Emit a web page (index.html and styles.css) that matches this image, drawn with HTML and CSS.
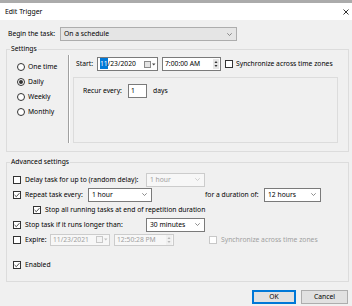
FILE: index.html
```html
<!DOCTYPE html>
<html lang="en">
<head>
  <meta charset="UTF-8" />
  <title>Edit Trigger</title>
  <link rel="stylesheet" href="styles.css">
</head>
<body>
  <div class="dialog">
    <div class="titlebar">
      <span>Edit Trigger</span>
      <svg class="close" width="6" height="6" viewBox="0 0 6 6"><path d="M0.5 0.5 L5.5 5.5 M5.5 0.5 L0.5 5.5" stroke="#333" stroke-width="1" fill="none"/></svg>
    </div>

    <div class="begin">
      <span class="lbl">Begin the task:</span>
      <div class="select flat">
        <span>On a schedule</span>
        <svg width="5" height="3" viewBox="0 0 5 3"><path d="M0.3 0.3 L2.5 2.5 L4.7 0.3" fill="none" stroke="#707070" stroke-width="0.8"/></svg>
      </div>
    </div>

    <fieldset class="group settings">
      <legend>Settings</legend>
      <div class="settings-body">
        <div class="radios">
          <div class="radio-row"><span class="radio"></span>One time</div>
          <div class="radio-row"><span class="radio on"></span>Daily</div>
          <div class="radio-row"><span class="radio"></span>Weekly</div>
          <div class="radio-row"><span class="radio"></span>Monthly</div>
        </div>
        <div class="sep"></div>
        <div class="schedule">
          <div class="start-row">
            <span class="lbl start-lbl">Start:</span>
            <div class="field date">
              <span><span class="sel">11</span>/23/2020</span>
              <svg width="12" height="7" viewBox="0 0 12 7"><rect x="0.5" y="0.5" width="6" height="6" fill="#e4e4e4" stroke="#8a8a8a"/><path d="M8 2.5 h3.5 l-1.75 2z" fill="#444"/></svg>
            </div>
            <div class="field time">
              <span>7:00:00 AM</span>
              <span class="spin">
                <svg width="6" height="10" viewBox="0 0 6 10"><rect x="0" y="0" width="6" height="10" fill="#e6e6e6"/><path d="M1.5 4 h3 l-1.5 -2z M1.5 6 h3 l-1.5 2z" fill="#333"/></svg>
              </span>
            </div>
            <span class="check"></span>
            <span>Synchronize across time zones</span>
          </div>
          <div class="recur-box">
            <div class="recur-row">
              <span class="lbl recur-lbl">Recur every:</span>
              <div class="field num">1</div>
              <span class="days">days</span>
            </div>
          </div>
        </div>
      </div>
    </fieldset>

    <fieldset class="group advanced">
      <legend>Advanced settings</legend>
      <div class="adv-body">
        <div class="adv-row">
          <span class="check"></span>
          <span class="lbl long">Delay task for up to (random delay):</span>
          <div class="select combo disabled">
            <span>1 hour</span>
            <svg width="5" height="3" viewBox="0 0 5 3"><path d="M0.3 0.3 L2.5 2.5 L4.7 0.3" fill="none" stroke="#c4c4c4" stroke-width="0.8"/></svg>
          </div>
        </div>
        <div class="adv-row">
          <span class="check on"><svg width="6" height="6" viewBox="0 0 6 6"><path d="M0.6 3 L2.3 4.7 L5.4 1.2" fill="none" stroke="#333" stroke-width="0.9"/></svg></span>
          <span class="lbl repeat-lbl">Repeat task every:</span>
          <div class="select combo repeat">
            <span>1 hour</span>
            <svg width="5" height="3" viewBox="0 0 5 3"><path d="M0.3 0.3 L2.5 2.5 L4.7 0.3" fill="none" stroke="#707070" stroke-width="0.8"/></svg>
          </div>
          <span class="lbl duration-lbl">for a duration of:</span>
          <div class="select combo duration">
            <span>12 hours</span>
            <svg width="5" height="3" viewBox="0 0 5 3"><path d="M0.3 0.3 L2.5 2.5 L4.7 0.3" fill="none" stroke="#707070" stroke-width="0.8"/></svg>
          </div>
        </div>
        <div class="adv-row indent">
          <span class="check on"><svg width="6" height="6" viewBox="0 0 6 6"><path d="M0.6 3 L2.3 4.7 L5.4 1.2" fill="none" stroke="#333" stroke-width="0.9"/></svg></span>
          <span>Stop all running tasks at end of repetition duration</span>
        </div>
        <div class="adv-row">
          <span class="check on"><svg width="6" height="6" viewBox="0 0 6 6"><path d="M0.6 3 L2.3 4.7 L5.4 1.2" fill="none" stroke="#333" stroke-width="0.9"/></svg></span>
          <span class="lbl long">Stop task if it runs longer than:</span>
          <div class="select combo">
            <span>30 minutes</span>
            <svg width="5" height="3" viewBox="0 0 5 3"><path d="M0.3 0.3 L2.5 2.5 L4.7 0.3" fill="none" stroke="#707070" stroke-width="0.8"/></svg>
          </div>
        </div>
        <div class="adv-row">
          <span class="check"></span>
          <span class="lbl expire-lbl">Expire:</span>
          <div class="field date exp disabled">
            <span>11/23/2021</span>
            <svg width="12" height="7" viewBox="0 0 12 7"><rect x="0.5" y="0.5" width="6" height="6" fill="#f4f4f4" stroke="#c8c8c8"/><path d="M8 2.5 h3.5 l-1.75 2z" fill="#c0c0c0"/></svg>
          </div>
          <div class="field time exp disabled">
            <span>12:50:28 PM</span>
            <span class="spin">
              <svg width="6" height="10" viewBox="0 0 6 10"><rect x="0" y="0" width="6" height="10" fill="#f0f0f0"/><path d="M1.5 4 h3 l-1.5 -2z M1.5 6 h3 l-1.5 2z" fill="#b8b8b8"/></svg>
            </span>
          </div>
          <span class="check disabled sync-check"></span>
          <span class="muted">Synchronize across time zones</span>
        </div>
        <div class="adv-row enabled">
          <span class="check on"><svg width="6" height="6" viewBox="0 0 6 6"><path d="M0.6 3 L2.3 4.7 L5.4 1.2" fill="none" stroke="#333" stroke-width="0.9"/></svg></span>
          <span>Enabled</span>
        </div>
      </div>
    </fieldset>

    <div class="buttons">
      <div class="btn default">OK</div>
      <div class="btn cancel">Cancel</div>
    </div>
  </div>
</body>
</html>
```

FILE: styles.css
```css
* {
  box-sizing: border-box;
  margin: 0;
  padding: 0;
}
body {
  width: 352px;
  height: 306px;
  overflow: hidden;
  background: #f0f0f0;
  font-family: "Noto Sans", "Liberation Sans", sans-serif;
  font-size: 6.75px;
  line-height: 10px;
  color: #000;
}
.dialog {
  height: 306px;
  border-top: 3px solid #ababab;
}
.titlebar {
  height: 17px;
  background: #fff;
  display: flex;
  align-items: center;
  justify-content: space-between;
  padding: 0 3px 0 5px;
  font-size: 6.9px;
}
.close {
  display: block;
}
.begin {
  display: flex;
  align-items: center;
  height: 14px;
  margin-top: 7px;
  padding-left: 8px;
}
.begin .lbl {
  width: 52px;
}
.select {
  display: flex;
  align-items: center;
  justify-content: space-between;
  height: 14px;
  border: 1px solid #7a7a7a;
  background: #fff;
  padding: 0 4px 0 3px;
}
.select svg {
  display: block;
}
.select.flat {
  width: 177px;
  border-color: #adadad;
  background: #e5e5e5;
}
.group {
  border: 1px solid #dcdcdc;
  margin: 0 3px 0 6px;
  min-width: 0;
}
.group legend {
  margin-left: 3px;
  padding: 0 1px;
  line-height: 10px;
}
.settings {
  margin-top: 3px;
}
.settings-body {
  display: flex;
  padding: 1px 0 8px;
}
.radios {
  width: 61px;
  padding: 4px 0 0 10px;
}
.radio-row {
  display: flex;
  align-items: center;
  gap: 3px;
  height: 15px;
}
.radio {
  width: 8px;
  height: 8px;
  border: 1px solid #333;
  border-radius: 50%;
  background: #fff;
  display: flex;
  align-items: center;
  justify-content: center;
}
.radio.on::after {
  content: "";
  width: 4px;
  height: 4px;
  border-radius: 50%;
  background: #333;
}
.sep {
  width: 2px;
  border-left: 1px solid #a0a0a0;
  border-right: 1px solid #fff;
}
.schedule {
  flex: 1;
  padding: 2px 10px 0 3px;
}
.start-row {
  display: flex;
  align-items: center;
  height: 14px;
  padding-left: 3px;
}
.start-lbl {
  width: 21px;
}
.field {
  display: flex;
  align-items: center;
  justify-content: space-between;
  height: 14px;
  border: 1px solid #7a7a7a;
  background: #fff;
  padding: 0 1px 0 2px;
}
.field svg {
  display: block;
}
.date {
  width: 61px;
}
.sel {
  background: #0078d7;
  color: #fff;
  padding: 1px 0;
}
.time {
  width: 59px;
  margin-left: 4px;
  margin-right: 4px;
}
.check {
  flex: none;
  width: 8px;
  height: 8px;
  border: 1px solid #333;
  background: #fff;
  margin-right: 3px;
  display: flex;
  align-items: center;
  justify-content: center;
}
.check svg {
  display: block;
}
.check.disabled {
  border-color: #c8c8c8;
}
.recur-box {
  margin-top: 6px;
  height: 66px;
  border: 1px solid #dcdcdc;
  padding: 6px 0 0 9px;
}
.recur-row {
  display: flex;
  align-items: center;
  height: 14px;
}
.recur-lbl {
  width: 45px;
}
.num {
  width: 19px;
  justify-content: flex-start;
}
.days {
  margin-left: 6px;
}
.advanced {
  margin-top: 5px;
}
.adv-body {
  padding: 5px 0 9px 6px;
}
.adv-row {
  display: flex;
  align-items: center;
  height: 15px;
}
.adv-row .check {
  margin-right: 4px;
}
.adv-row.indent {
  padding-left: 20px;
}
.adv-row.enabled {
  margin-top: 10px;
}
.long {
  width: 121px;
}
.combo {
  width: 59px;
}
.combo.disabled {
  border-color: #cccccc;
  background: #f7f7f7;
  color: #a0a0a0;
}
.repeat-lbl {
  width: 63px;
}
.combo.repeat {
  width: 64px;
}
.duration-lbl {
  margin-left: 53px;
  width: 59px;
}
.combo.duration {
  width: 57px;
}
.expire-lbl {
  width: 25px;
}
.field.exp {
  height: 12px;
  width: 60px;
}
.field.time.exp {
  margin-left: 4px;
  margin-right: 35px;
}
.field.disabled {
  border-color: #cccccc;
  background: #f7f7f7;
  color: #a0a0a0;
}
.muted {
  color: #a0a0a0;
}
.buttons {
  display: flex;
  justify-content: flex-end;
  gap: 5px;
  margin-top: 8px;
  padding-right: 4px;
}
.btn {
  height: 14px;
  display: flex;
  align-items: center;
  justify-content: center;
  border: 1px solid #adadad;
  background: #e1e1e1;
}
.btn.default {
  width: 44px;
  border-color: #0078d7;
  box-shadow: inset 0 0 0 1px #0078d7;
}
.btn.cancel {
  width: 47px;
}
```
